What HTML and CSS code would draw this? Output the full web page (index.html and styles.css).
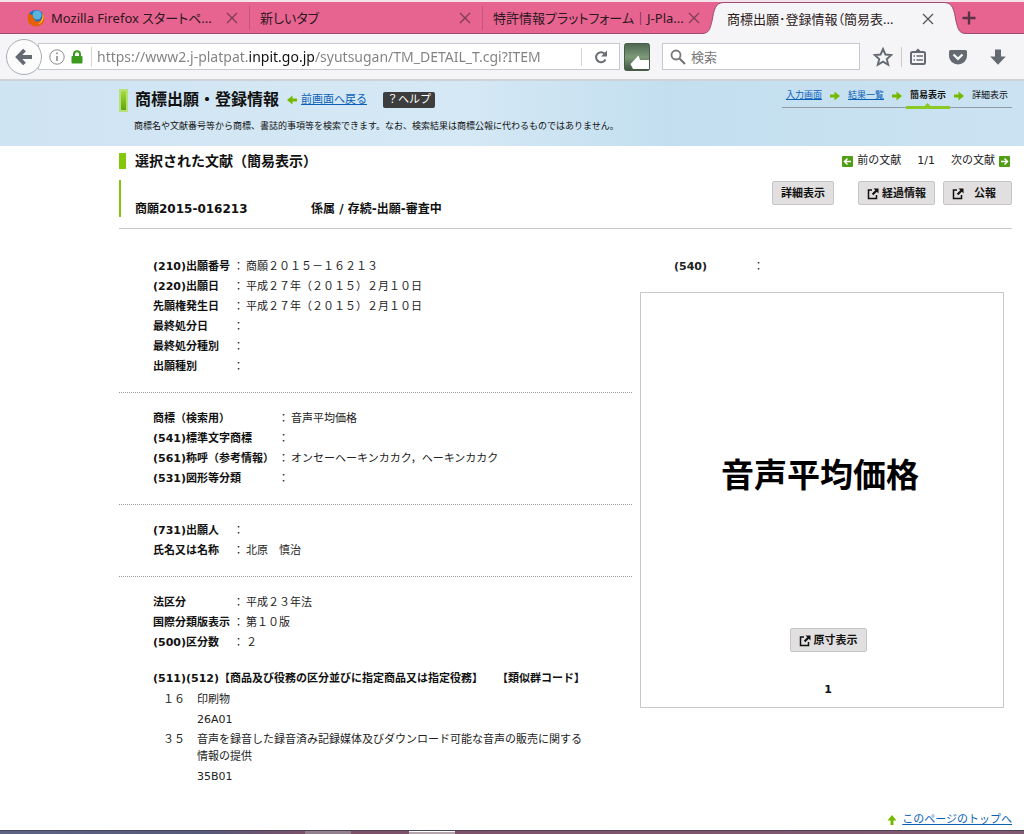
FILE: index.html
```
<!DOCTYPE html>
<html lang="ja">
<head>
  <meta charset="UTF-8" />
  <title>商標出願・登録情報（簡易表示）</title>
  <link rel="stylesheet" href="styles.css">
</head>
<body>

<svg width="0" height="0" class="defs">
  <symbol id="close" viewBox="0 0 12 12"><path d="M1 1L11 11M11 1L1 11" stroke="currentColor" stroke-width="1.3"/></symbol>
  <symbol id="arrow" viewBox="0 0 10 10"><path d="M0 3.5H4.5V0.5L10 5L4.5 9.5V6.5H0Z" fill="#76b900"/></symbol>
  <symbol id="popup" viewBox="0 0 12 12"><path d="M5 2H1.5V10.5H9.5V7" fill="none" stroke="#111" stroke-width="1.5"/><path d="M6.5 0.5H11.5V5.5L9.8 3.8L6.3 7.3L4.8 5.8L8.3 2.3Z" fill="#111"/></symbol>
</svg>

<div class="tabs">
  <div class="tab first">
    <svg class="firefox" viewBox="0 0 18 18">
      <circle cx="9" cy="9" r="8" fill="#2a6fb5"/>
      <circle cx="10" cy="6" r="4.5" fill="#58b4e0"/>
      <path d="M2 4C0 8 0 12 3 15C7 19 14 18 16.5 13C18 10 17.5 6 15.5 4C16 9 14 12 11 12.5C8 13 7 11 8 9.5L5.5 9L6.5 6.5C5 6 3 6 2 4Z" fill="#e66000"/>
      <path d="M15.5 4C18 8 16 14 11 15.5C15 12 16 9 15.5 4Z" fill="#ffc53a"/>
    </svg>
    <span class="tab-title">Mozilla Firefox スタートペ...</span>
    <button class="tab-close" aria-label="閉じる"><svg><use href="#close"/></svg></button>
  </div>
  <div class="tab">
    <span class="tab-title">新しいタブ</span>
    <button class="tab-close" aria-label="閉じる"><svg><use href="#close"/></svg></button>
  </div>
  <div class="tab last">
    <span class="tab-title">特許情報プラットフォーム｜J-Pla...</span>
    <button class="tab-close" aria-label="閉じる"><svg><use href="#close"/></svg></button>
  </div>
  <div class="tab-active">
    <svg class="edge" viewBox="0 0 22 32"><path d="M0 32V31.5C7 31.5 8 27 10 19C12 8 13 0.5 22 0.5V32Z" fill="#f5f5f7"/><path d="M0 31.5C7 31.5 8 27 10 19C12 8 13 0.5 22 0.5" fill="none" stroke="#9d4a70"/></svg>
    <div class="tab-body">
      <span class="tab-title">商標出願･登録情報（簡易表...</span>
      <button class="tab-close" aria-label="閉じる"><svg><use href="#close"/></svg></button>
    </div>
    <svg class="edge" viewBox="0 0 22 32"><path d="M22 32V31.5C15 31.5 14 27 12 19C10 8 9 0.5 0 0.5V32Z" fill="#f5f5f7"/><path d="M22 31.5C15 31.5 14 27 12 19C10 8 9 0.5 0 0.5" fill="none" stroke="#9d4a70"/></svg>
  </div>
  <button class="new-tab" aria-label="新しいタブを開く"><svg viewBox="0 0 14 14"><path d="M7 0.5V13.5M0.5 7H13.5" stroke="#5b3346" stroke-width="2.4"/></svg></button>
</div>

<div class="toolbar">
  <button class="back" aria-label="戻る"><svg viewBox="0 0 18 18"><path d="M9.5 2L2.8 9L9.5 16M3 9H17" fill="none" stroke="#656a72" stroke-width="3.8"/></svg></button>
  <div class="url-bar">
    <svg class="info" viewBox="0 0 16 16"><circle cx="8" cy="8" r="7.2" fill="none" stroke="#8b8b8b"/><path d="M8 7V12M8 3.5V5.3" stroke="#8b8b8b" stroke-width="1.6"/></svg>
    <svg class="lock" viewBox="0 0 12 14"><path d="M3 7V4.2A3 3 0 0 1 9 4.2V7" fill="none" stroke="#3c9a1f" stroke-width="2"/><rect x="0.5" y="6" width="11" height="7.5" rx="1" fill="#3c9a1f"/></svg>
    <input class="url" type="text" aria-label="URL" value="https://www2.j-platpat.inpit.go.jp/syutsugan/TM_DETAIL_T.cgi?ITEM">
    <button class="reload" aria-label="更新"><svg viewBox="0 0 14 14"><path d="M11.5 9.5A5 5 0 1 1 10.5 3.5" fill="none" stroke="#6b6f75" stroke-width="2"/><path d="M13 0.5V6.5H7Z" fill="#6b6f75"/></svg></button>
  </div>
  <button class="addon" aria-label="アドオン"><svg viewBox="0 0 26 28">
    <defs><linearGradient id="moss" x1="0" y1="0" x2="0" y2="1"><stop offset="0" stop-color="#4c6650"/><stop offset="0.5" stop-color="#7d9a78"/><stop offset="1" stop-color="#40543f"/></linearGradient></defs>
    <rect x="0.5" y="0.5" width="25" height="27" rx="2" fill="url(#moss)" stroke="#485c4a"/>
    <path d="M6.5 21L14.5 12.5L16 17H25V26H9Z" fill="#fff"/></svg></button>
  <label class="search">
    <svg viewBox="0 0 16 16"><circle cx="6" cy="6" r="4.5" fill="none" stroke="#777" stroke-width="1.8"/><path d="M9.5 9.5L15 15" stroke="#777" stroke-width="2.2"/></svg>
    <input type="text" placeholder="検索" aria-label="検索">
  </label>
  <div class="tools">
    <button aria-label="ブックマーク"><svg viewBox="0 0 20 20"><path d="M10 2L12.4 7.5L18.3 8L13.8 12L15.2 17.8L10 14.7L4.8 17.8L6.2 12L1.7 8L7.6 7.5Z" fill="none" stroke="#656a72" stroke-width="1.9"/></svg></button>
    <button class="divided" aria-label="ブックマーク一覧"><svg viewBox="0 0 20 20"><path d="M7 4.5L10 1.5L13 4.5Z" fill="#656a72"/><rect x="3" y="5" width="14" height="12" rx="1.5" fill="none" stroke="#656a72" stroke-width="2"/><path d="M5.5 9H7M8.5 9H15M5.5 13H7M8.5 13H15" stroke="#656a72" stroke-width="1.5"/></svg></button>
    <button aria-label="Pocket"><svg viewBox="0 0 20 20"><path d="M2.5 3H17.5Q19 3 19 4.5V9A9 8.5 0 0 1 1 9V4.5Q1 3 2.5 3Z" fill="#656a72"/><path d="M5.5 7.5L10 11.8L14.5 7.5" fill="none" stroke="#f5f5f7" stroke-width="2.4"/></svg></button>
    <button aria-label="ダウンロード"><svg viewBox="0 0 20 20"><path d="M7 2.5H13V9.5H17.8L10 17.8L2.2 9.5H7Z" fill="#656a72"/></svg></button>
  </div>
</div>

<header class="header">
  <div class="header-main">
    <div class="header-title">
      <span class="leaf"></span>
      <h1>商標出願・登録情報</h1>
      <svg class="arrow-back" viewBox="0 0 10 10"><use href="#arrow"/></svg>
      <a href="#">前画面へ戻る</a>
      <button class="help">？ヘルプ</button>
    </div>
    <p>商標名や文献番号等から商標、書誌的事項等を検索できます。なお、検索結果は商標公報に代わるものではありません。</p>
  </div>
  <nav class="steps">
    <a href="#">入力画面</a>
    <svg viewBox="0 0 10 10"><use href="#arrow"/></svg>
    <a href="#">結果一覧</a>
    <svg viewBox="0 0 10 10"><use href="#arrow"/></svg>
    <b>簡易表示</b>
    <svg viewBox="0 0 10 10"><use href="#arrow"/></svg>
    <span>詳細表示</span>
  </nav>
</header>

<main class="page">
  <div class="section-head">
    <h2>選択された文献（簡易表示）</h2>
    <div class="pager">
      <span class="pager-item"><svg class="flip" viewBox="0 0 11 11"><rect width="11" height="11" rx="1" fill="#4f9e14"/><path d="M2 5.5H8M5.5 2.5L8.5 5.5L5.5 8.5" fill="none" stroke="#fff" stroke-width="1.5"/></svg>前の文献</span>
      <span>1/1</span>
      <span class="pager-item">次の文献<svg viewBox="0 0 11 11"><rect width="11" height="11" rx="1" fill="#4f9e14"/><path d="M2 5.5H8M5.5 2.5L8.5 5.5L5.5 8.5" fill="none" stroke="#fff" stroke-width="1.5"/></svg></span>
    </div>
  </div>

  <div class="doc-head">
    <div class="doc-name">
      <span class="doc-number">商願2015-016213</span>
      <span>係属 / 存続-出願-審査中</span>
    </div>
    <div class="doc-buttons">
      <button class="btn detail">詳細表示</button>
      <button class="btn"><svg><use href="#popup"/></svg>経過情報</button>
      <button class="btn wide"><svg><use href="#popup"/></svg>公報</button>
    </div>
  </div>

  <div class="content">
    <div class="info-list">
      <dl class="group">
        <dt>(210)出願番号</dt><dd>商願２０１５－１６２１３</dd>
        <dt>(220)出願日</dt><dd>平成２７年（２０１５）２月１０日</dd>
        <dt>先願権発生日</dt><dd>平成２７年（２０１５）２月１０日</dd>
        <dt>最終処分日</dt><dd></dd>
        <dt>最終処分種別</dt><dd></dd>
        <dt>出願種別</dt><dd></dd>
      </dl>
      <dl class="group long">
        <dt>商標（検索用）</dt><dd>音声平均価格</dd>
        <dt>(541)標準文字商標</dt><dd></dd>
        <dt>(561)称呼（参考情報）</dt><dd>オンセーヘーキンカカク，ヘーキンカカク</dd>
        <dt>(531)図形等分類</dt><dd></dd>
      </dl>
      <dl class="group">
        <dt>(731)出願人</dt><dd></dd>
        <dt>氏名又は名称</dt><dd>北原　慎治</dd>
      </dl>
      <dl class="group">
        <dt>法区分</dt><dd>平成２３年法</dd>
        <dt>国際分類版表示</dt><dd>第１０版</dd>
        <dt>(500)区分数</dt><dd>２</dd>
      </dl>
      <div class="goods">
        <h3><span>(511)(512)【商品及び役務の区分並びに指定商品又は指定役務】</span><span>【類似群コード】</span></h3>
        <dl>
          <dt>１６</dt>
          <dd><p>印刷物</p><p>26A01</p></dd>
          <dt>３５</dt>
          <dd><p>音声を録音した録音済み記録媒体及びダウンロード可能な音声の販売に関する情報の提供</p><p>35B01</p></dd>
        </dl>
      </div>
    </div>

    <aside class="mark">
      <div class="mark-head"><b>(540)</b><span>：</span></div>
      <div class="mark-box">
        <div class="mark-text">音声平均価格</div>
        <div class="mark-foot">
          <button class="btn"><svg><use href="#popup"/></svg>原寸表示</button>
          <b>1</b>
        </div>
      </div>
    </aside>
  </div>

  <div class="page-top">
    <svg viewBox="0 0 10 10"><use href="#arrow"/></svg>
    <a href="#">このページのトップへ</a>
  </div>
</main>

<div class="taskbar"><span></span><span class="current"></span></div>

</body>
</html>
```
FILE: styles.css
```
* {
  box-sizing: border-box;
}

body {
  margin: 0;
  min-height: 100vh;
  display: flex;
  flex-direction: column;
  background: #fff;
  color: #222;
  font-family: "DejaVu Sans", "Noto Sans CJK JP", sans-serif;
  font-size: 11px;
  line-height: 20px;
}

h1, h2, h3, p, dl, dd {
  margin: 0;
}

button, input {
  font: inherit;
  color: inherit;
  border: none;
  background: none;
  padding: 0;
}

button {
  display: flex;
  align-items: center;
  justify-content: center;
  cursor: pointer;
}

svg {
  flex: none;
}

a {
  color: #0a62b8;
}

.defs {
  position: absolute;
}

/* browser tabs */
.tabs {
  display: flex;
  align-items: flex-end;
  height: 34px;
  border-top: 2px solid #f3e3ea;
  background: #e86490;
  box-shadow: inset 0 -1px #9d4a70;
  color: #2b1820;
  font-family: "Noto Sans", "Noto Sans CJK JP", sans-serif;
  font-size: 13px;
}

.tab {
  display: flex;
  align-items: center;
  flex: 0 1 233px;
  min-width: 0;
  height: 32px;
  padding: 0 12px 0 10px;
  background: linear-gradient(#c4557b, #c4557b) right center / 1px 24px no-repeat;
}

.tab.first {
  flex-basis: 250px;
  padding-left: 27px;
}

.tab.last {
  flex-basis: 219px;
  padding-right: 2px;
  background: none;
}

.tab-title {
  flex: 1;
  overflow: hidden;
  white-space: nowrap;
  font-feature-settings: "palt";
}

.firefox {
  width: 18px;
  height: 18px;
  margin-right: 6px;
}

.tab-close svg {
  width: 12px;
  height: 12px;
  color: #7d3d57;
}

.tab-active {
  display: flex;
  flex: 0 1 264px;
  height: 32px;
}

.edge {
  width: 22px;
  height: 32px;
}

.tab-body {
  display: flex;
  align-items: center;
  flex: 1;
  padding: 0 10px 0 3px;
  border-top: 1px solid #9d4a70;
  background: #f5f5f7;
}

.tab-body .tab-close svg {
  color: #555;
}

.new-tab {
  height: 32px;
  margin-left: -4px;
}

.new-tab svg {
  width: 14px;
  height: 14px;
}

/* browser toolbar */
.toolbar {
  display: flex;
  align-items: center;
  height: 47px;
  padding: 0 16px 0 6px;
  border-bottom: 2px solid #cfd3d8;
  background: #f5f5f7;
  font-family: "Noto Sans", "Noto Sans CJK JP", sans-serif;
  font-size: 14px;
}

.back {
  width: 36px;
  height: 36px;
  margin-right: -4px;
  border: 1px solid #a9adb3;
  border-radius: 50%;
  background: #fbfbfc;
  z-index: 1;
}

.back svg {
  width: 18px;
  height: 18px;
}

.url-bar {
  display: flex;
  align-items: center;
  flex: 1;
  height: 27px;
  padding-left: 10px;
  border: 1px solid #c3c8d2;
  background: #fff;
}

.info {
  width: 16px;
  height: 16px;
}

.lock {
  width: 12px;
  height: 14px;
  margin: 0 8px 0 6px;
}

/* the domain part of the address is darker than the rest */
.url {
  flex: 1;
  min-width: 0;
  height: 20px;
  padding-left: 5px;
  border-left: 1px solid #d5d5d5;
  background: linear-gradient(90deg, #808080 157px, #111 157px, #111 223px, #808080 223px);
  background-clip: text;
  -webkit-background-clip: text;
  color: transparent;
}

.reload {
  width: 38px;
  height: 18px;
  border-left: 1px solid #d5d5d5;
}

.reload svg {
  width: 14px;
  height: 14px;
}

.addon {
  margin: 0 12px 0 4px;
}

.addon svg {
  width: 26px;
  height: 28px;
}

.search {
  display: flex;
  align-items: center;
  width: 198px;
  height: 27px;
  padding: 0 7px;
  border: 1px solid #c3c8d2;
  background: #fff;
}

.search svg {
  width: 16px;
  height: 16px;
  margin-right: 5px;
}

.search input {
  flex: 1;
  min-width: 0;
  font-size: 13px;
}

.search input::placeholder {
  color: #777;
}

.tools {
  display: flex;
  gap: 20px;
  margin-left: 13px;
}

.tools svg {
  width: 20px;
  height: 20px;
}

.tools .divided {
  margin-left: -12px;
  padding-left: 6px;
  border-left: 1px solid #ccc;
}

/* page header */
.header {
  display: flex;
  justify-content: space-between;
  align-items: flex-start;
  height: 65px;
  padding: 6px 12px 0 119px;
  background: linear-gradient(90deg, #cfe4f3, #d5e8f5 45%, #c3dfef 65%, #cbe2f2);
  color: #111;
}

.header-title {
  display: flex;
  align-items: center;
  height: 26px;
}

.leaf {
  width: 9px;
  height: 23px;
  margin-right: 7px;
  border: 2px solid #b9e07a;
  background: linear-gradient(#a6dc3a, #5ca70c);
}

.header h1 {
  font-size: 16px;
}

.arrow-back {
  width: 10px;
  height: 10px;
  margin: 0 4px 0 8px;
  transform: rotate(180deg);
}

.help {
  height: 16px;
  margin-left: 16px;
  padding: 0 4px;
  border-radius: 2px;
  background: #3d3d3d;
  color: #fff;
  font-size: 11px;
}

.header p {
  margin-left: 15px;
  margin-top: 4px;
  font-size: 9px;
  line-height: 18px;
}

.steps {
  display: flex;
  align-items: flex-start;
  gap: 8px;
  height: 21px;
  padding: 0 4px;
  border-bottom: 1px solid #8f9ba3;
  font-size: 9px;
  line-height: 16px;
}

.steps svg {
  width: 10px;
  height: 10px;
  margin-top: 4px;
}

.steps b {
  height: 22px;
  margin: 0 -4px;
  padding: 0 4px;
  border-bottom: 3px solid #8ac926;
  background: conic-gradient(from 135deg at 50% 0, #8ac926 90deg, transparent 0) center bottom / 6px 3px no-repeat;
}

/* result page */
.page {
  flex: 1;
  display: flex;
  flex-direction: column;
  padding: 5px 12px 0 119px;
}

.section-head {
  display: flex;
  justify-content: space-between;
  align-items: center;
  height: 20px;
}

.section-head h2 {
  padding-left: 9px;
  border-left: 7px solid #84c80a;
  color: #111;
  font-size: 14px;
  line-height: 16px;
}

.pager {
  display: flex;
  gap: 16px;
  padding-right: 2px;
}

.pager-item {
  display: flex;
  align-items: center;
  gap: 4px;
}

.pager svg {
  width: 11px;
  height: 11px;
}

.flip {
  transform: rotate(180deg);
}

.doc-head {
  display: flex;
  justify-content: space-between;
  margin-top: 9px;
  padding-bottom: 11px;
  border-bottom: 1px solid #c8c8c8;
}

.doc-name {
  display: flex;
  align-items: flex-end;
  height: 37px;
  padding-left: 14px;
  border-left: 2px solid #84c80a;
  color: #111;
  font-size: 12px;
  font-weight: bold;
  line-height: 16px;
}

.doc-number {
  width: 176px;
}

.doc-buttons {
  display: flex;
  align-items: flex-start;
  gap: 8px;
  padding-top: 1px;
}

.btn {
  gap: 3px;
  height: 24px;
  padding: 1px 8px 0;
  border: 1px solid #c6c6c6;
  border-radius: 2px;
  background: #e1dfdf;
  color: #111;
  font-weight: bold;
}

.btn svg {
  width: 12px;
  height: 12px;
}

.btn.detail {
  margin-right: 16px;
}

.btn.wide {
  gap: 10px;
  padding-right: 15px;
}

.content {
  display: grid;
  grid-template-columns: minmax(0, 1fr) 364px;
  gap: 8px;
  padding: 28px 8px 0 0;
}

.group {
  display: grid;
  grid-template-columns: 80px 1fr;
  padding: 16px 0 15px 34px;
  border-bottom: 1px dotted #999;
}

.group:first-child {
  padding-top: 0;
}

.group:nth-child(4) {
  padding-bottom: 16px;
  border-bottom: none;
}

.group.long {
  grid-template-columns: 125px 1fr;
}

.group dt {
  color: #111;
  font-weight: bold;
  white-space: nowrap;
}

.group dd {
  min-height: 20px;
}

.group dd::before {
  content: "：";
  margin-right: 2px;
}

.goods {
  padding-left: 34px;
}

.goods h3 {
  display: flex;
  gap: 14px;
  color: #111;
  font-size: 11px;
  white-space: nowrap;
}

.goods dl {
  display: grid;
  grid-template-columns: 34px 1fr;
  padding: 0 42px 0 10px;
}

.goods dt, .goods p {
  padding: 2px 0 1px;
  line-height: 17px;
}

.mark-head {
  display: flex;
  gap: 46px;
  padding-left: 34px;
}

.mark-box {
  display: flex;
  flex-direction: column;
  align-items: center;
  margin-top: 15px;
  padding: 158px 4px 7px 0;
  border: 1px solid #c8c8c8;
  color: #111;
}

.mark-text {
  margin-bottom: 127px;
  color: #000;
  font-size: 33px;
  font-weight: bold;
  line-height: 50px;
}

.mark-foot {
  display: flex;
  flex-direction: column;
  align-items: center;
  gap: 28px;
  padding-left: 16px;
}

.page-top {
  display: flex;
  justify-content: flex-end;
  align-items: center;
  gap: 5px;
  margin-top: auto;
}

.page-top svg {
  width: 10px;
  height: 10px;
  transform: rotate(-90deg);
}

/* top edge of the desktop taskbar */
.taskbar {
  display: flex;
  gap: 58px;
  height: 4px;
  padding-left: 305px;
  border-top: 1px solid #4b4458;
  background: linear-gradient(90deg, #5d6484, #55597a 20%, #7d5068 30%, #805a72);
}

.taskbar span {
  width: 46px;
  background: #93808f;
}

.taskbar .current {
  background: #b5a5ad;
  border-top: 1px solid #fff;
}
```
